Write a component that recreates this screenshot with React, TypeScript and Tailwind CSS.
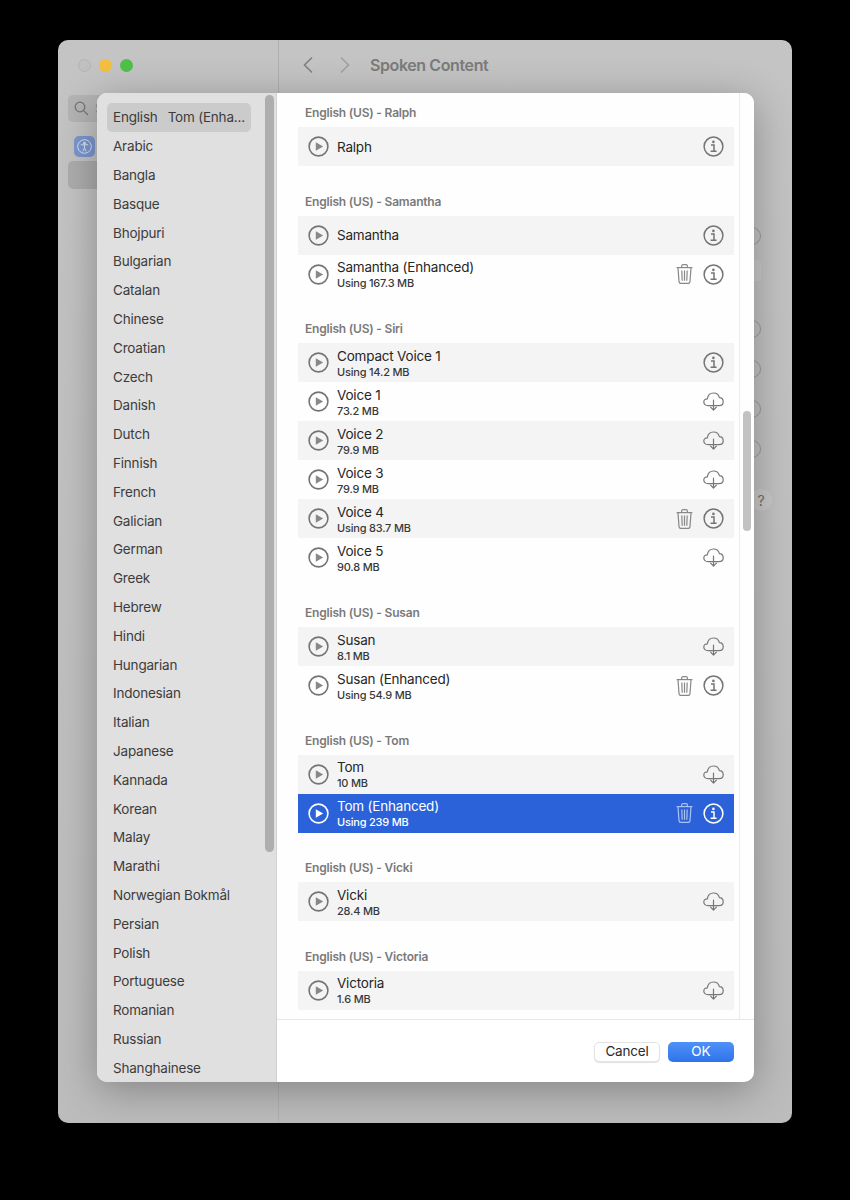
import React from 'react'

const languages = [
  'Arabic', 'Bangla', 'Basque', 'Bhojpuri', 'Bulgarian', 'Catalan', 'Chinese', 'Croatian', 'Czech', 'Danish',
  'Dutch', 'Finnish', 'French', 'Galician', 'German', 'Greek', 'Hebrew', 'Hindi', 'Hungarian', 'Indonesian',
  'Italian', 'Japanese', 'Kannada', 'Korean', 'Malay', 'Marathi', 'Norwegian Bokmål', 'Persian', 'Polish',
  'Portuguese', 'Romanian', 'Russian', 'Shanghainese',
]

type Voice = {
  name: string
  sub?: string
  action: 'info' | 'cloud' | 'both'
  selected?: boolean
}

const groups: Array<{ title: string; voices: Voice[] }> = [
  { title: 'English (US) - Ralph', voices: [{ name: 'Ralph', action: 'info' }] },
  {
    title: 'English (US) - Samantha',
    voices: [
      { name: 'Samantha', action: 'info' },
      { name: 'Samantha (Enhanced)', sub: 'Using 167.3 MB', action: 'both' },
    ],
  },
  {
    title: 'English (US) - Siri',
    voices: [
      { name: 'Compact Voice 1', sub: 'Using 14.2 MB', action: 'info' },
      { name: 'Voice 1', sub: '73.2 MB', action: 'cloud' },
      { name: 'Voice 2', sub: '79.9 MB', action: 'cloud' },
      { name: 'Voice 3', sub: '79.9 MB', action: 'cloud' },
      { name: 'Voice 4', sub: 'Using 83.7 MB', action: 'both' },
      { name: 'Voice 5', sub: '90.8 MB', action: 'cloud' },
    ],
  },
  {
    title: 'English (US) - Susan',
    voices: [
      { name: 'Susan', sub: '8.1 MB', action: 'cloud' },
      { name: 'Susan (Enhanced)', sub: 'Using 54.9 MB', action: 'both' },
    ],
  },
  {
    title: 'English (US) - Tom',
    voices: [
      { name: 'Tom', sub: '10 MB', action: 'cloud' },
      { name: 'Tom (Enhanced)', sub: 'Using 239 MB', action: 'both', selected: true },
    ],
  },
  { title: 'English (US) - Vicki', voices: [{ name: 'Vicki', sub: '28.4 MB', action: 'cloud' }] },
  { title: 'English (US) - Victoria', voices: [{ name: 'Victoria', sub: '1.6 MB', action: 'cloud' }] },
]

function PlayIcon({ selected }: { selected?: boolean }) {
  return (
    <svg width="21" height="21" viewBox="0 0 21 21" className={selected ? 'text-white shrink-0' : 'text-[#747474] shrink-0'}>
      <circle cx="10.5" cy="10.5" r="9.4" fill="none" stroke="currentColor" strokeWidth="1.6" />
      <path d="M7.8 6.2 L15.2 10.5 L7.8 14.8 Z" fill="currentColor" opacity={selected ? 1 : 0.85} />
    </svg>
  )
}

function InfoIcon({ selected }: { selected?: boolean }) {
  return (
    <svg width="21" height="21" viewBox="0 0 21 21" className={selected ? 'text-white' : 'text-[#747474]'}>
      <circle cx="10.5" cy="10.5" r="9.4" fill="none" stroke="currentColor" strokeWidth="1.5" />
      <circle cx="10.4" cy="5.9" r="1.3" fill="currentColor" />
      <path d="M8 9.1 H11 V15 M7.6 15.2 H13.6" fill="none" stroke="currentColor" strokeWidth="1.5" />
    </svg>
  )
}

function TrashIcon({ selected }: { selected?: boolean }) {
  return (
    <svg width="17" height="20" viewBox="0 0 17 20" fill="none" stroke="currentColor" strokeWidth="1.2" className={selected ? 'text-[#a9c3f2]' : 'text-[#888888]'}>
      <path d="M0.6 3.6 H16.4" />
      <path d="M5.6 3.4 V2.2 C5.6 1.2 6.2 0.7 7 0.7 H10 C10.8 0.7 11.4 1.2 11.4 2.2 V3.4" />
      <path d="M2 3.8 L3 17.6 C3.1 18.7 3.7 19.3 4.7 19.3 H12.3 C13.3 19.3 13.9 18.7 14 17.6 L15 3.8" />
      <path d="M5.8 6.4 L6.2 16.8 M8.5 6.4 V16.8 M11.2 6.4 L10.8 16.8" />
    </svg>
  )
}

function CloudIcon() {
  return (
    <svg width="21" height="19" viewBox="0 0 21 19" fill="none" stroke="currentColor" strokeWidth="1.2" strokeLinecap="round" strokeLinejoin="round" className="text-[#777777]">
      <path d="M5 13.6 C2.6 13.6 0.8 12.1 0.8 10 C0.8 8 2.4 6.7 4.3 6.8 C4.9 3.3 7.4 1 10.5 1 C13.4 1 15.8 3 16.4 5.7 C18.6 5.8 20.2 7.5 20.2 9.7 C20.2 11.9 18.4 13.6 16 13.6 Z" />
      <path d="M10.5 8.2 V18 M7.6 15.2 L10.5 18.1 L13.4 15.2" />
    </svg>
  )
}

function VoiceRow({ voice, shaded }: { voice: Voice; shaded: boolean }) {
  const bg = voice.selected ? 'bg-[#2b62d9]' : shaded ? 'bg-[#f4f4f4]' : 'bg-[#fefefe]'
  return (
    <div className={`h-[39px] flex items-center pl-[10px] pr-[10px] ${bg}`}>
      <PlayIcon selected={voice.selected} />
      <div className="ml-[8px] pt-[1px] flex-1 min-w-0">
        <p className={`text-[13.5px] tracking-[-0.2px] leading-[17px] ${voice.selected ? 'text-white' : 'text-[#262626]'}`}>{voice.name}</p>
        {voice.sub && (
          <p className={`text-[11px] tracking-[-0.2px] leading-[14px] font-medium ${voice.selected ? 'text-white' : 'text-[#3a3a3a]'}`}>{voice.sub}</p>
        )}
      </div>
      <div className="flex items-center gap-[10px]">
        {voice.action === 'both' && <TrashIcon selected={voice.selected} />}
        {voice.action === 'cloud' ? <CloudIcon /> : <InfoIcon selected={voice.selected} />}
      </div>
    </div>
  )
}

function BackgroundWindow() {
  return (
    <div className="w-[734px] h-[1083px] rounded-[10px] overflow-hidden flex bg-gradient-to-b from-[#c4c4c4] to-[#bcbcbc]">
      {/* Sidebar */}
      <div className="w-[221px] border-r border-[#b0b0b0] px-[10px]">
        <div className="h-[50px] flex items-center gap-[8px] pl-[10px]">
          <span className="w-[13px] h-[13px] rounded-full bg-[#c0c0c0] border border-[#b4b4b4]" />
          <span className="w-[13px] h-[13px] rounded-full bg-[#f4bf40]" />
          <span className="w-[13px] h-[13px] rounded-full bg-[#4fc04a]" />
        </div>
        <div className="mt-[5px] h-[27px] rounded-[5px] bg-[#b4b4b4] flex items-center pl-[6px]">
          <svg width="15" height="15" viewBox="0 0 15 15" fill="none" stroke="#757575" strokeWidth="1.3">
            <circle cx="6" cy="6" r="4.8" />
            <path d="M9.6 9.6 L14 14" />
          </svg>
          <span className="ml-[6px] text-[13px] text-[#8a8a8a]">S</span>
        </div>
        <div className="mt-[14px] w-[21px] h-[21px] ml-[6px] rounded-[5px] bg-[#7c97cf] flex items-center justify-center">
          <svg width="15" height="15" viewBox="0 0 15 15" fill="none" stroke="#d9e2f2" strokeWidth="1">
            <circle cx="7.5" cy="7.5" r="6.8" />
            <circle cx="7.5" cy="4.2" r="1" fill="#d9e2f2" />
            <path d="M3.8 5.8 H11.2 M7.5 6 V9 M7.5 9 L5.8 12.4 M7.5 9 L9.2 12.4" />
          </svg>
        </div>
        <div className="mt-[4px] h-[28px] rounded-[5px] bg-[#adadad]" />
      </div>

      {/* Main pane */}
      <div className="flex-1">
        <div className="h-[50px] flex items-center pl-[23px]">
          <svg width="12" height="18" viewBox="0 0 12 18" fill="none" stroke="#808080" strokeWidth="1.6">
            <path d="M10 1.5 L2.5 9 L10 16.5" />
          </svg>
          <svg width="12" height="18" viewBox="0 0 12 18" fill="none" stroke="#a0a0a0" strokeWidth="1.6" className="ml-[25px]">
            <path d="M2 1.5 L9.5 9 L2 16.5" />
          </svg>
          <span className="ml-[19px] text-[16px] tracking-[-0.4px] font-semibold text-[#7b7b7b]">Spoken Content</span>
        </div>
        <div className="pr-[31px] flex flex-col items-end">
          <span className="mt-[137px] w-[18px] h-[18px] rounded-full border border-[#9a9a9a]" />
          <span className="mt-[15px] w-[40px] h-[21px] rounded-[4px] bg-[#c9c9c9]" />
          <span className="mt-[39px] w-[18px] h-[18px] rounded-full border border-[#9a9a9a]" />
          <span className="mt-[22px] w-[18px] h-[18px] rounded-full border border-[#9a9a9a]" />
          <span className="mt-[22px] w-[18px] h-[18px] rounded-full border border-[#9a9a9a]" />
          <span className="mt-[22px] w-[18px] h-[18px] rounded-full border border-[#9a9a9a]" />
          <span className="mt-[31px] mr-[-11px] w-[22px] h-[22px] rounded-full bg-[#c8c8c8] flex items-center justify-center text-[14px] text-[#707070]">?</span>
        </div>
      </div>
    </div>
  )
}

export default function App() {
  return (
    <div
      className="w-[850px] h-[1200px] bg-black pt-[40px] pl-[58px] relative overflow-hidden"
      style={{ fontFamily: 'Inter, "Liberation Sans", sans-serif' }}
    >
      <BackgroundWindow />

      {/* Voices sheet */}
      <div className="absolute left-[97px] top-[93px] w-[657px] h-[989px] rounded-[10px] overflow-hidden flex bg-white shadow-[0_8px_40px_rgba(0,0,0,0.3)]">
        {/* Language list */}
        <div className="w-[180px] h-full bg-[#e0e0e0] border-r border-[#d2d2d2] flex overflow-hidden">
          <div className="w-[168px] pt-[10px] pl-[10px] shrink-0">
            <div className="w-[144px] h-[29px] rounded-[5px] bg-[#cbcbcb] flex items-center pl-[6px] text-[13.5px] tracking-[-0.2px] text-[#3c3c3c] whitespace-nowrap">
              <span>English</span>
              <span className="ml-[10px]">Tom (Enha...</span>
            </div>
            {languages.map((lang) => (
              <div key={lang} className="h-[28.8px] flex items-center pl-[6px] text-[13.5px] tracking-[-0.2px] text-[#3c3c3c] whitespace-nowrap">
                {lang}
              </div>
            ))}
          </div>
          <div className="mt-[2px] w-[9px] h-[757px] rounded-full bg-[#aeaeae] shrink-0" />
        </div>

        {/* Voice list and footer */}
        <div className="flex-1 flex flex-col">
          <div className="h-[927px] flex border-b border-[#e6e6e6] overflow-hidden bg-[#fefefe]">
            <div className="w-[462px] pl-[21px] pr-[5px] shrink-0">
              {groups.map((group, i) => (
                <div key={group.title}>
                  <div className={`flex items-end pb-[7px] pl-[7px] text-[12px] tracking-[-0.2px] leading-[14px] font-semibold text-[#7a7a7a] ${i === 0 ? 'h-[34.25px]' : 'h-[49.6px]'}`}>
                    {group.title}
                  </div>
                  {group.voices.map((voice, j) => (
                    <VoiceRow key={voice.name} voice={voice} shaded={j % 2 === 0} />
                  ))}
                </div>
              ))}
            </div>
            <div className="flex-1 border-l border-[#ececec] pl-[3px] pt-[318px]">
              <div className="w-[8px] h-[120px] rounded-full bg-[#c2c2c2]" />
            </div>
          </div>
          <div className="flex-1 flex items-center justify-end gap-[8px] pr-[20px] pt-[1px]">
            <button className="w-[66px] h-[20px] rounded-[5px] bg-white border border-[#e3e3e3] shadow-[0_1px_1px_rgba(0,0,0,0.12)] text-[13.5px] tracking-[-0.2px] leading-none text-[#2a2a2a]">
              Cancel
            </button>
            <button className="w-[66px] h-[20px] rounded-[5px] bg-gradient-to-b from-[#4f91f8] to-[#2f73ea] text-[13.5px] leading-none text-white">
              OK
            </button>
          </div>
        </div>
      </div>
    </div>
  )
}
